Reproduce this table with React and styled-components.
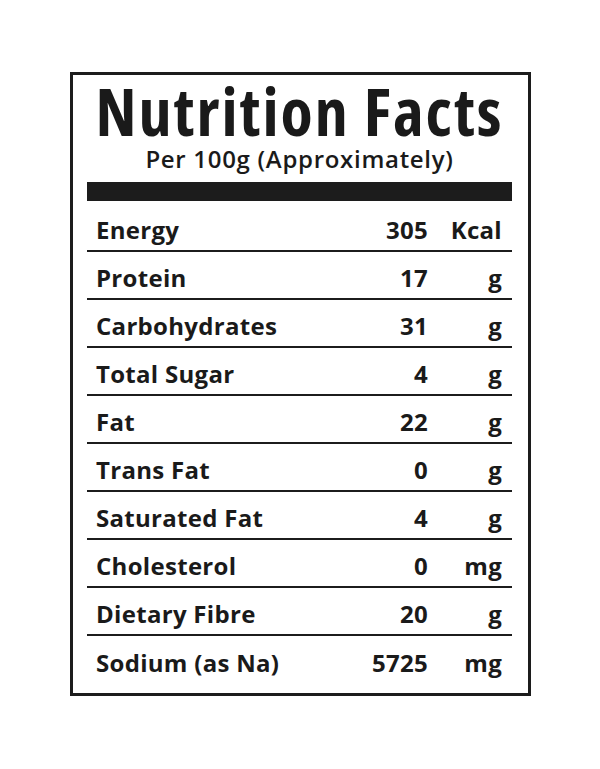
import React from 'react';
import styled, { createGlobalStyle } from 'styled-components';

const GlobalStyle = createGlobalStyle`
  body {
    margin: 0;
    background: #ffffff;
    font-family: "Open Sans", "Liberation Sans", sans-serif;
    color: #1a1a1a;
  }
`;

const Page = styled.div`
  width: 600px;
  height: 769px;
  padding-top: 72px;
  box-sizing: border-box;
`;

const Label = styled.section`
  margin-left: 70px;
  width: 461px;
  height: 624px;
  box-sizing: border-box;
  border: 3px solid #1c1c1c;
  padding: 3px 16px 0 14px;
  display: flex;
  flex-direction: column;
`;

const Title = styled.h1`
  margin: 0;
  text-align: center;
  white-space: nowrap;
  font-size: 66px;
  line-height: 64px;
  font-weight: 700;
  font-stretch: 87.5%;
  letter-spacing: 2px;
`;

const Subtitle = styled.div`
  margin-top: 3px;
  text-align: center;
  white-space: nowrap;
  font-size: 24px;
  line-height: 28px;
  font-weight: 600;
  letter-spacing: 0.7px;
`;

const Bar = styled.div`
  margin-top: 9px;
  height: 19px;
  background: #1c1c1c;
`;

const Rows = styled.div`
  margin-top: 3px;
`;

const Row = styled.div`
  display: grid;
  grid-template-columns: 1fr 80px 84px;
  align-items: center;
  height: 48px;
  box-sizing: border-box;
  padding-top: 6px;
  border-bottom: ${({ $last }) => ($last ? 'none' : '2px solid #1c1c1c')};
  font-size: 24px;
  line-height: 30px;
  font-weight: 700;
  letter-spacing: 0.3px;
`;

const Name = styled.span`
  padding-left: 9px;
`;

const Amount = styled.span`
  text-align: right;
`;

const Unit = styled.span`
  text-align: right;
  padding-right: 10px;
`;

const facts = [
  ['Energy', '305', 'Kcal'],
  ['Protein', '17', 'g'],
  ['Carbohydrates', '31', 'g'],
  ['Total Sugar', '4', 'g'],
  ['Fat', '22', 'g'],
  ['Trans Fat', '0', 'g'],
  ['Saturated Fat', '4', 'g'],
  ['Cholesterol', '0', 'mg'],
  ['Dietary Fibre', '20', 'g'],
  ['Sodium (as Na)', '5725', 'mg'],
];

export default function App() {
  return (
    <Page>
      <GlobalStyle />
      <Label>
        <Title>Nutrition Facts</Title>
        <Subtitle>Per 100g (Approximately)</Subtitle>
        <Bar />
        <Rows>
          {facts.map(([name, amount, unit], i) => (
            <Row key={name} $last={i === facts.length - 1}>
              <Name>{name}</Name>
              <Amount>{amount}</Amount>
              <Unit>{unit}</Unit>
            </Row>
          ))}
        </Rows>
      </Label>
    </Page>
  );
}
